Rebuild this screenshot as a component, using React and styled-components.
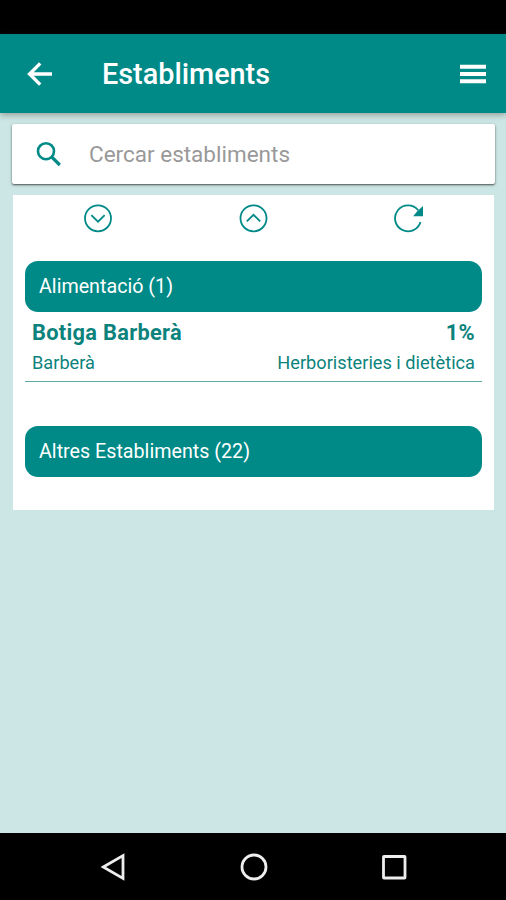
import React from 'react';
import styled, { createGlobalStyle } from 'styled-components';

const TEAL = '#008a87';

const groups = [
  {
    name: 'Alimentació',
    count: 1,
    items: [
      {
        name: 'Botiga Barberà',
        discount: '1%',
        town: 'Barberà',
        category: 'Herboristeries i dietètica',
      },
    ],
  },
  { name: 'Altres Establiments', count: 22, items: [] },
];

const App = () => {
  return (
    <Screen>
      <GlobalStyle />
      <StatusBar />

      <Header>
        <IconButton aria-label="Enrere">
          <svg width="26" height="26" viewBox="0 0 26 26" fill="none" stroke="#fff" strokeWidth="3.4">
            <path d="M26 13H3.6M14.2 2.4L3.6 13L14.2 23.6" />
          </svg>
        </IconButton>
        <Title>Establiments</Title>
        <IconButton aria-label="Menú">
          <svg width="26" height="20" viewBox="0 0 26 20" fill="#fff">
            <path d="M0 .8h26v4H0zM0 8h26v4H0zM0 15.2h26v4H0z" />
          </svg>
        </IconButton>
      </Header>

      <Content>
        <SearchCard>
          <svg width="26" height="26" viewBox="0 0 26 26" fill="none" stroke={TEAL} strokeWidth="2.6">
            <circle cx="10" cy="10.2" r="8" />
            <path d="M15.6 15.8L23.8 24" strokeWidth="3.2" />
          </svg>
          <SearchInput placeholder="Cercar establiments" />
        </SearchCard>

        <Panel>
          <Toolbar>
            <ToolButton aria-label="Desplegar">
              <svg width="30" height="30" viewBox="0 0 30 30">
                <circle cx="15" cy="15.3" r="13" />
                <path d="M8.3 12.2L15 18.7L21.7 12.2" />
              </svg>
            </ToolButton>
            <ToolButton aria-label="Plegar">
              <svg width="30" height="30" viewBox="0 0 30 30">
                <circle cx="15.5" cy="15.3" r="13" />
                <path d="M8.8 18.3L15.5 11.8L22.2 18.3" />
              </svg>
            </ToolButton>
            <ToolButton aria-label="Actualitzar">
              <svg width="30" height="30" viewBox="0 0 30 30">
                <path d="M25.2 7.2A13 13 0 1 0 27.5 19" />
                <path d="M30 3V13.2H20.2L24 8.4Z" fill={TEAL} stroke="none" />
              </svg>
            </ToolButton>
          </Toolbar>

          {groups.map((group) => (
            <Group key={group.name}>
              <GroupHeader>
                {group.name} ({group.count})
              </GroupHeader>
              {group.items.map((item) => (
                <Item key={item.name}>
                  <ItemRow $strong>
                    <span>{item.name}</span>
                    <span>{item.discount}</span>
                  </ItemRow>
                  <ItemRow>
                    <span>{item.town}</span>
                    <span>{item.category}</span>
                  </ItemRow>
                </Item>
              ))}
            </Group>
          ))}
        </Panel>
      </Content>

      <NavBar>
        <svg width="28" height="30" viewBox="0 0 28 30">
          <path d="M4.3 15L24 3.6V26.4Z" />
        </svg>
        <svg width="28" height="30" viewBox="0 0 28 30">
          <circle cx="14" cy="15" r="12" />
        </svg>
        <svg width="28" height="30" viewBox="0 0 28 30">
          <rect x="3.5" y="4.5" width="21.5" height="21.5" rx="0.5" />
        </svg>
      </NavBar>
    </Screen>
  );
};

const GlobalStyle = createGlobalStyle`
  * {
    box-sizing: border-box;
  }

  body {
    margin: 0;
    font-family: Roboto, 'Liberation Sans', sans-serif;
  }
`;

const Screen = styled.div`
  display: flex;
  flex-direction: column;
  width: 100%;
  height: 900px;
  background: #cce6e5;
  overflow: hidden;
`;

const StatusBar = styled.div`
  flex: 0 0 34px;
  background: #000;
`;

const Header = styled.header`
  display: flex;
  align-items: center;
  flex: 0 0 79px;
  padding: 0 20px 0 26px;
  background: ${TEAL};
  box-shadow: 0 2px 6px rgba(90, 70, 60, 0.45);
`;

const IconButton = styled.button`
  display: flex;
  padding: 0;
  border: none;
  background: none;
  cursor: pointer;
`;

const Title = styled.h1`
  flex: 1;
  margin: 0 0 0 50px;
  font-size: 28.8px;
  line-height: 34px;
  font-weight: 500;
  color: #fff;
`;

const Content = styled.main`
  flex: 1;
  padding: 11px 11px 0 12px;
`;

const SearchCard = styled.div`
  display: flex;
  align-items: center;
  height: 60px;
  padding: 0 24px;
  background: #fff;
  border-radius: 2px;
  box-shadow: 0 1px 2px rgba(0, 0, 0, 0.6), 0 1px 4px rgba(0, 0, 0, 0.12);
`;

const SearchInput = styled.input`
  flex: 1;
  min-width: 0;
  margin-left: 27px;
  padding: 0;
  border: none;
  outline: none;
  background: none;
  font-family: inherit;
  font-size: 22.5px;
  color: #333;

  &::placeholder {
    color: #999;
  }
`;

const Panel = styled.section`
  height: 315px;
  margin: 11px 1px 0;
  padding: 0 12px;
  background: #fff;
`;

const Toolbar = styled.div`
  display: grid;
  grid-template-columns: repeat(3, 155px);
  justify-content: center;
  height: 66px;
  padding: 8px 1px 0 0;
`;

const ToolButton = styled(IconButton)`
  justify-content: center;
  align-items: flex-start;

  svg {
    fill: none;
    stroke: ${TEAL};
    stroke-width: 1.8;
  }
`;

const Group = styled.div`
  & + & {
    margin-top: 44px;
  }
`;

const GroupHeader = styled.div`
  height: 51px;
  padding-left: 14px;
  border-radius: 13px;
  background: ${TEAL};
  font-size: 19.7px;
  line-height: 51px;
  color: #fff;
`;

const Item = styled.div`
  height: 70px;
  padding: 6px 7px 0;
  border-bottom: 1px solid #5fa9a3;
`;

const ItemRow = styled.div`
  display: flex;
  justify-content: space-between;
  font-size: ${(props) => (props.$strong ? '21.8px' : '18.2px')};
  font-weight: ${(props) => (props.$strong ? 700 : 400)};
  letter-spacing: ${(props) => (props.$strong ? '0.3px' : 'normal')};
  line-height: 30px;
  color: #0b837c;
`;

const NavBar = styled.nav`
  display: flex;
  justify-content: space-between;
  align-items: center;
  flex: 0 0 67px;
  padding: 0 98px 0 99px;
  background: #000;

  svg {
    fill: none;
    stroke: #eee;
    stroke-width: 2.8;
  }
`;

export default App;
